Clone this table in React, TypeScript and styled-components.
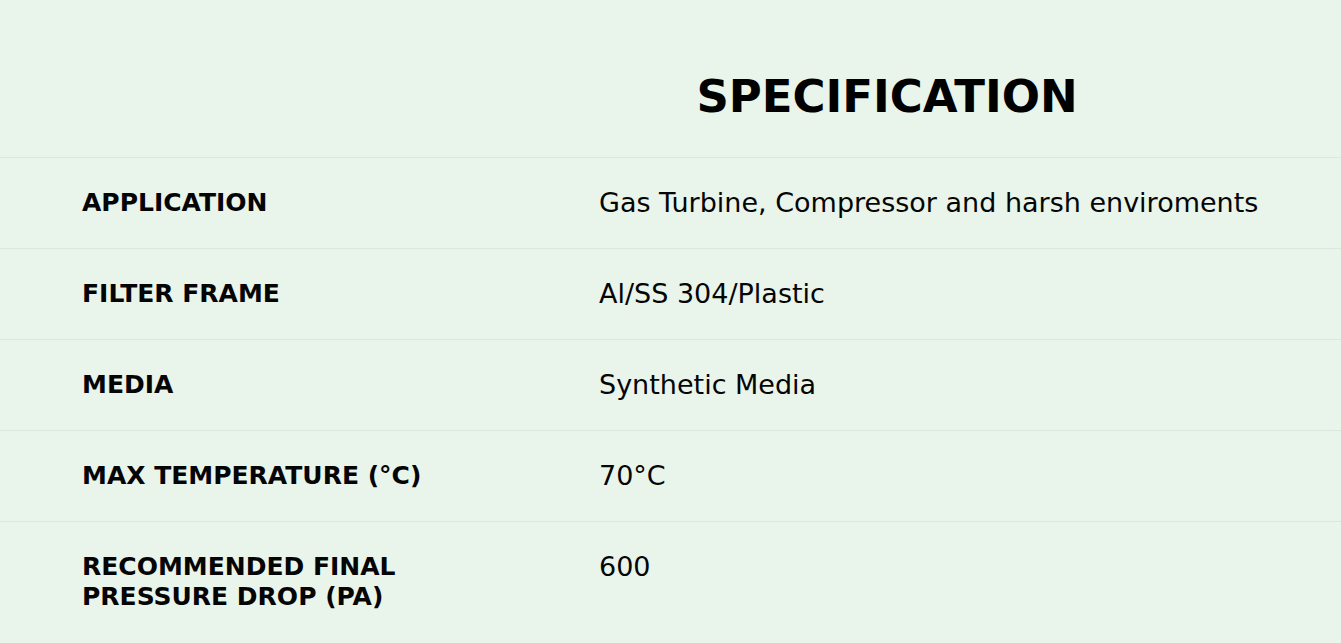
import React from "react";
import styled, { createGlobalStyle } from "styled-components";

const GlobalStyle = createGlobalStyle`
  html, body {
    margin: 0;
    padding: 0;
    background: #e9f4eb;
  }
  body {
    font-family: "DejaVu Sans", "Open Sans", sans-serif;
    color: #050505;
  }
`;

const Section = styled.section`
  width: 100%;
  height: 643px;
  overflow: hidden;
  background: #e9f4eb;
`;

const Grid = styled.div`
  display: grid;
  grid-template-columns: 517px 1fr;
`;

const Heading = styled.h2`
  grid-column: 2;
  margin: 0;
  box-sizing: border-box;
  height: 157px;
  padding: 36px 84px 0 0;
  display: flex;
  align-items: center;
  justify-content: center;
  font-size: 45px;
  font-weight: 700;
  color: #000;
`;

const Cell = styled.div<{ $label?: boolean }>`
  border-top: 1px solid #dce6de;
  padding: 30px 20px 30px 82px;
  line-height: 30px;
  font-size: ${(p) => (p.$label ? "25px" : "27px")};
  font-weight: ${(p) => (p.$label ? 700 : 400)};
  text-transform: ${(p) => (p.$label ? "uppercase" : "none")};
  white-space: ${(p) => (p.$label ? "normal" : "nowrap")};
`;

const specs: [string, string][] = [
  ["Application", "Gas Turbine, Compressor and harsh enviroments"],
  ["Filter Frame", "Al/SS 304/Plastic"],
  ["Media", "Synthetic Media"],
  ["Max Temperature (°C)", "70°C"],
  ["Recommended Final Pressure Drop (Pa)", "600"],
];

export default function App() {
  return (
    <Section>
      <GlobalStyle />
      <Grid>
        <Heading>SPECIFICATION</Heading>
        {specs.map(([label, value]) => (
          <React.Fragment key={label}>
            <Cell $label>{label}</Cell>
            <Cell>{value}</Cell>
          </React.Fragment>
        ))}
      </Grid>
    </Section>
  );
}
